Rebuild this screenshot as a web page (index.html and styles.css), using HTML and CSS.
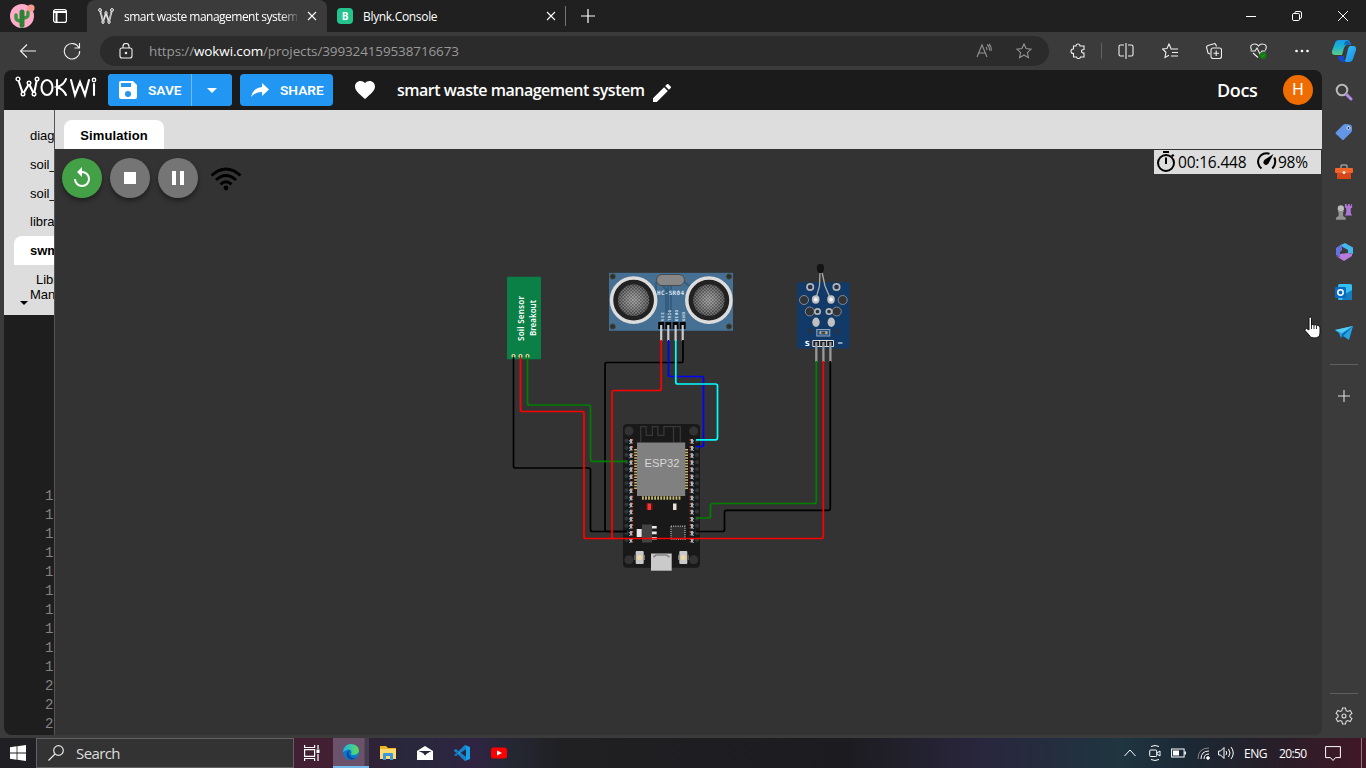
FILE: index.html
```html
<!DOCTYPE html>
<html lang="en">
<head>
<meta charset="utf-8">
<title>smart waste management system</title>
<link rel="stylesheet" href="styles.css">
</head>
<body>
<div class="browser">
  <header class="tabstrip">
    <svg class="profile" viewBox="0 0 24 24"><circle cx="12" cy="12" r="12" fill="#ffabc9"/><path d="M12 22V8M6 11v3q0 3 6 3M18 8v3q0 3-6 3" fill="none" stroke="#38943d" stroke-width="3.4" stroke-linecap="round"/><path d="M12 8v13" stroke="#2d8133" stroke-width="5" stroke-linecap="round"/><circle cx="21" cy="4" r="3.6" fill="#f69c8c"/></svg>
    <svg class="workspaces" viewBox="0 0 14 14"><rect x=".6" y=".6" width="12.8" height="12.8" rx="2" fill="none" stroke="#fff" stroke-width="1.2"/><path d="M1 3h12M3.5 3v10" stroke="#fff" stroke-width="2"/></svg>
    <div class="tab tab-active">
      <svg class="favicon" viewBox="0 0 16 16"><path d="M2 2l3 12 3-9 3 9 3-12" fill="none" stroke="#e6e6e6" stroke-width="1.700"/><path d="M2.5 2l3 12M11 14l2.5-12" stroke="#aaa"/><g fill="#333" stroke="#fff"><circle cx="2" cy="2" r="1.4"/><circle cx="14" cy="2" r="1.4"/><circle cx="8" cy="5" r="1.2"/><circle cx="5" cy="14" r="1.2"/><circle cx="11" cy="14" r="1.2"/></g></svg>
      <span class="tab-title fade">smart waste management system</span>
      <svg class="close" viewBox="0 0 10 10"><path d="M1 1l8 8M9 1l-8 8"/></svg>
    </div>
    <div class="tab tab-idle">
      <span class="blynk">B</span>
      <span class="tab-title">Blynk.Console</span>
      <svg class="close" viewBox="0 0 10 10"><path d="M1 1l8 8M9 1l-8 8"/></svg>
    </div>
    <svg class="newtab" viewBox="0 0 14 14"><path d="M7 0v14M0 7h14"/></svg>
    <div class="window-buttons">
      <svg viewBox="0 0 12 12"><path d="M1 6.5h10"/></svg>
      <svg viewBox="0 0 12 12"><rect x="1.5" y="3.5" width="7" height="7" rx="1.2"/><path d="M4 3.5v-1q0-1 1-1h4q1.500 0 1.500 1.500v4q0 1.500-1.500 1.500"/></svg>
      <svg viewBox="0 0 12 12"><path d="M1 1l10 10M11 1L1 11"/></svg>
    </div>
  </header>

  <div class="toolbar">
    <svg class="ico back" viewBox="0 0 18 18"><path d="M17 9H2M8 2.500L1.500 9 8 15.500"/></svg>
    <svg class="ico reload" viewBox="0 0 18 18"><path d="M16 6A7.700 7.700 0 1 0 16.700 9M16.500 1v5h-5"/></svg>
    <div class="address">
      <svg class="ico lock" viewBox="0 0 14 16"><rect x="1" y="5" width="12" height="10" rx="2"/><path d="M4 5V3.500a3 3 0 0 1 6 0V5"/><circle cx="7" cy="10" r=".7" fill="#fff"/></svg>
      <span class="url">https://<b>wokwi.com</b>/projects/399324159538716673</span>
      <svg class="ico dim read" viewBox="0 0 16 16"><path d="M1 14L6 2l5 12M3 10h6M10 4q1 1 .8 3M11 1.500q3 2 2.500 6M13 1q3 3 2 7"/></svg>
      <svg class="ico dim star" viewBox="0 0 16 16"><path d="M8 1l2.100 4.600 5 .6-3.700 3.400 1 5L8 12l-4.400 2.600 1-5L.9 6.200l5-.6z"/></svg>
    </div>
    <svg class="ico puzzle" viewBox="0 0 16 16"><path d="M3.500 3H6q0-2 2-2t2 2h4v3.500q-2.500 0-2.500 1.700T14 10v4h-3.500q0 1.500-2 1.500t-2-1.500h-3v-3.500Q1 10.500 1 8.200T3.500 6z"/></svg>
    <i class="bar"></i>
    <svg class="ico split" viewBox="0 0 16 16"><path d="M6 2H2.500Q1 2 1 3.500v8Q1 13 2.500 13H6M10 2h3.500Q15 2 15 3.500v8q0 1.500-1.500 1.500H10M8 0v16"/></svg>
    <svg class="ico favs" viewBox="0 0 16 16"><path d="M9 5.500L7 1 5 5.500.5 6l3.400 3.300-.9 5.200L7 12.200M8.500 6H16M10 9.500h6M9 13h7"/></svg>
    <svg class="ico coll" viewBox="0 0 16 16"><rect x="5" y="5" width="10.500" height="10.500" rx="2"/><path d="M10.200 7.500v5.500M7.500 10.200H13M4 11L2 10 .6 4.500Q.3 3 2 2.500L8 .7q1.500-.4 2 1.300l.5 1.500"/></svg>
    <svg class="ico heartbeat" viewBox="0 0 17 16"><path d="M1.500 7Q-1 1 5 1q2 0 3.500 2Q10 1 12 1q6 0 3.500 6M.5 8H5l2-3 3 6 2-3h3.500M3 10l5 4.500"/><circle cx="13" cy="12.500" r="3.500" fill="#107c10" stroke="none"/><path d="M11.600 12.600l1 1 2-2" stroke="#4a4" stroke-width=".7"/></svg>
    <svg class="ico dots" viewBox="0 0 16 16"><g fill="#fff" stroke="none"><circle cx="2.500" cy="8" r="1.300"/><circle cx="8" cy="8" r="1.300"/><circle cx="13.500" cy="8" r="1.300"/></g></svg>
    <svg class="copilot" viewBox="0 0 24 22"><defs><linearGradient id="ca" x2="0" y2="1"><stop stop-color="#159be4"/><stop offset=".5" stop-color="#20b5cd"/><stop offset="1" stop-color="#61cd80"/></linearGradient><linearGradient id="cb" x2="1" y2="1"><stop stop-color="#38c8f5"/><stop offset="1" stop-color="#168bed"/></linearGradient></defs><path d="M7 0h8q3 0 4 5h-4q-2 0-3 3l-2 7H3q-4 0-3-4l3-8q1-3 4-3z" fill="url(#ca)"/><path d="M12 5q1-5 4-4 2 .5 3 4z" fill="#126abb"/><path d="M18 6h3q4 0 3 4l-3 9q-1 3-4 3h-7q3 0 4-4l2-9q1-3 2-3z" fill="url(#cb)"/><path d="M6 16h6q-1 6 4 6h-5q-4 0-5-6z" fill="#1749d0"/></svg>
  </div>

  <div class="content">
    <main class="page">
      <nav class="appbar">
        <svg class="logo" viewBox="0 0 82 24"><g fill="none" stroke="#fff" stroke-width="2.100" stroke-linecap="round"><path d="M3 3l5 15 6-10 5 10 3-15"/><ellipse cx="32" cy="11.500" rx="5.500" ry="7.500"/><path d="M42 4v15M51 3q-2 6-9 8 6 2 9 8M56 4l4 15 5-13 5 13 4-15M79 8v11"/></g><g fill="#1b1b1b" stroke="#fff" stroke-width="1.400"><circle cx="3" cy="3" r="1.900"/><circle cx="14" cy="7" r="1.800"/><circle cx="22" cy="3" r="1.800"/><circle cx="8" cy="18" r="1.800"/><circle cx="19" cy="18" r="1.800"/><circle cx="79" cy="4" r="1.700"/></g></svg>
        <div class="save">
          <button class="btn btn-save"><svg viewBox="0 0 18 18"><path d="M2 0h12l4 4v12q0 2-2 2H2q-2 0-2-2V2Q0 0 2 0zm0 2v4h10V2zm7 8a3 3 0 1 0 0 6 3 3 0 0 0 0-6z" fill="#fff" fill-rule="evenodd"/></svg>SAVE</button>
          <button class="btn btn-drop"><svg viewBox="0 0 10 5"><path d="M0 0h10L5 5z" fill="#fff"/></svg></button>
        </div>
        <button class="btn btn-share"><svg viewBox="0 0 18 14"><path d="M18 6.500L11 0v4Q2 5 0 14q4-5 11-5v4z" fill="#fff"/></svg>SHARE</button>
        <svg class="heart" viewBox="0 0 20 18"><path d="M10 18L8.500 16.700C3.400 12.200 0 9.200 0 5.500 0 2.400 2.400 0 5.500 0 7.200 0 8.900.8 10 2.100 11.100.8 12.800 0 14.500 0 17.600 0 20 2.400 20 5.500c0 3.700-3.400 6.700-8.500 11.200z" fill="#fff"/></svg>
        <h1>smart waste management system</h1>
        <svg class="pencil" viewBox="0 0 18 18"><path d="M0 14.200V18h3.800L14.800 6.900l-3.700-3.700zM17.700 4a1 1 0 0 0 0-1.400L15.400.3a1 1 0 0 0-1.400 0l-1.800 1.800 3.700 3.700z" fill="#fff"/></svg>
        <a class="docs">Docs</a>
        <span class="avatar">H</span>
      </nav>

      <div class="workspace">
        <section class="editor">
          <div class="files">
            <div class="file">diagram</div>
            <div class="file">soil_</div>
            <div class="file">soil_</div>
            <div class="file">library</div>
            <div class="file selected">swm</div>
            <div class="manager">Library<br>Manager</div>
            <svg class="files-arrow" viewBox="0 0 8 4"><path d="M0 0h8L4 4z"/></svg>
          </div>
          <div class="code"><span>1</span><span>1</span><span>1</span><span>1</span><span>1</span><span>1</span><span>1</span><span>1</span><span>1</span><span>1</span><span>2</span><span>2</span><span>2</span></div>
        </section>

        <section class="simulation">
          <div class="sim-tabs"><div class="sim-tab">Simulation</div></div>
          <div class="canvas">
            <svg class="diagram" viewBox="55 149 1267 586">
              <defs>
                <pattern id="mesh" width="3.200" height="3.200" patternUnits="userSpaceOnUse"><rect width="3.200" height="3.200" fill="#4d4d4d"/><path d="M0 0h1.600v1.600H0zM1.600 1.600h1.600v1.600H1.600z" fill="#aaa"/></pattern>
                <radialGradient id="shade"><stop stop-color="#bbb" stop-opacity=".3"/><stop offset="1" stop-color="#222" stop-opacity=".45"/></radialGradient>
              </defs>

              <g class="soil">
                <rect x="507" y="276.800" width="34" height="82.400" rx="1" fill="#0b8046"/>
                <g fill="#3b4733" stroke="#e9e7a5" stroke-width="1.200"><circle cx="513.500" cy="356" r="1.500"/><circle cx="520.500" cy="356" r="1.500"/><circle cx="527.500" cy="356" r="1.500"/></g>
                <text transform="translate(524.300 341) rotate(-90)" textLength="45">Soil Sensor</text>
                <text transform="translate(535.500 336) rotate(-90)" textLength="36">Breakout</text>
              </g>

              <g class="sonar">
                <rect x="609" y="272.800" width="124" height="58" fill="#456f93"/>
                <path d="M658 281l8 8v24M668 286v27M671 286v27M683 281l10 8M656 282v12" fill="none" stroke="#345b7f" stroke-width="1.800"/>
                <g fill="#2b3030" stroke="#444832" stroke-width="1"><circle cx="612.700" cy="276.500" r="2.600"/><circle cx="729" cy="276.500" r="2.600"/><circle cx="612.700" cy="331" r="0"/><circle cx="612.700" cy="326.500" r="2.600"/><circle cx="729" cy="326.500" r="2.600"/></g>
                <g fill="#222" stroke="#dcdcdc" stroke-width="3.500"><circle cx="633.600" cy="300.200" r="22.100"/><circle cx="708.900" cy="300.200" r="22.100"/></g>
                <g fill="url(#mesh)"><circle cx="633.600" cy="300.200" r="15.600"/><circle cx="708.900" cy="300.200" r="15.600"/></g>
                <g fill="url(#shade)"><circle cx="633.600" cy="300.200" r="15.600"/><circle cx="708.900" cy="300.200" r="15.600"/></g>
                <rect x="656.500" y="274.500" width="28" height="11" rx="5.500" fill="#878787" stroke="#4b4b4b"/>
                <text class="mono" x="657" y="295" textLength="27">HC-SR04</text>
                <g class="tiny"><text transform="translate(663.500 321) rotate(-90)" textLength="9">VCC</text><text transform="translate(670.500 321) rotate(-90)" textLength="11">TRIG</text><text transform="translate(677.500 321) rotate(-90)" textLength="11">ECHO</text><text transform="translate(684.500 321) rotate(-90)" textLength="9">GND</text></g>
                <path d="M661.200 322v7M668.300 322v7M675.600 322v7M682.700 322v7" stroke="#080808" stroke-width="6"/>
                <path d="M661.200 325v16M668.300 325v16M675.600 325v16M682.700 325v16" stroke="#ccc" stroke-width="2.200"/>
              </g>

              <g class="thermistor">
                <rect x="797" y="282.300" width="52.500" height="66.200" fill="#123a69"/>
                <path d="M820 272l-.5 14-4 14M822 272l3 14 6 14" fill="none" stroke="#aaa" stroke-width="1.300"/>
                <path d="M817.500 265q3-2.500 6 0 1.500 4-1 8h-4q-3-4-1-8z" fill="#141414"/>
                <g fill="#303338" stroke="#898989" stroke-width="1"><circle cx="804" cy="300" r="4.500"/><circle cx="842.700" cy="300" r="4.500"/><circle cx="809.800" cy="311.500" r="4.500"/><circle cx="836.800" cy="311.500" r="4.500"/></g>
                <g fill="#243349" stroke="#b4b4b4" stroke-width="1.700"><circle cx="810.200" cy="287" r="3.200"/><circle cx="836.500" cy="287" r="3.200"/><circle cx="817.500" cy="311.500" r="2.700"/><circle cx="829" cy="311.500" r="2.700"/></g>
                <g fill="#c0c0c0"><ellipse cx="815.700" cy="299.500" rx="3.800" ry="4.200"/><ellipse cx="831" cy="299.500" rx="3.800" ry="4.200"/><ellipse cx="816" cy="322.300" rx="3.700" ry="4.700"/><ellipse cx="831.300" cy="322.300" rx="3.700" ry="4.700"/></g>
                <g fill="#f5f5f5"><circle cx="815.700" cy="299.500" r="2"/><circle cx="831" cy="299.500" r="2"/></g>
                <g fill="#24344b"><circle cx="810" cy="331" r="2.800"/><circle cx="836.800" cy="331" r="2.800"/></g>
                <rect x="816.800" y="329.500" width="13" height="6.500" fill="#275381" stroke="#91a6ba"/><path d="M819.500 332.700h8" stroke="#b6b6a8" stroke-width="3"/><path d="M821.300 332.700h4" stroke="#333" stroke-width="2"/>
                <text x="804.800" y="346.300">S</text><path d="M838 343h4.500" stroke="#fff"/>
                <path d="M812.800 340.500h20.700v6h-20.700zM819.700 340.500v6M826.700 340.500v6" fill="#161b24" stroke="#ddd" stroke-width="1"/>
                <path d="M816.300 342v20M823.400 342v20M830.400 342v20" stroke="#999" stroke-width="2.300"/>
              </g>

              <g class="esp">
                <rect x="623" y="424" width="77" height="143.800" rx="4" fill="#191919"/>
                <g fill="#323232"><circle cx="629" cy="431" r="4.500"/><circle cx="693.700" cy="431" r="4.500"/><circle cx="629" cy="559.700" r="4.500"/><circle cx="693.700" cy="559.700" r="4.500"/></g>
                <path d="M640.700 442v-15.300h5.500v8.600h6.200v-8.600h5.500v8.600h6v-8.600h16.400V442M673.500 427v15" fill="none" stroke="#373737" stroke-width="1.300"/>
                <path d="M626.500 440.800V541M697 440.800V541" stroke="#343434" stroke-width="4.200" stroke-linecap="round" stroke-dasharray="0 7.080"/>
                <g fill="none" stroke-width="1.200">
                  <path d="M631 439v104M692 439v104" stroke="#dedede" stroke-width="1.600" stroke-dasharray="4.500 2.580"/>
                  <path d="M632.500 439v104M690.300 439v104" stroke="#dc4f35" stroke-dasharray="2 1.200 1.300 2.580"/>
                  <path d="M629.600 440v104M693.400 440v104" stroke="#43a6d2" stroke-dasharray="1.500 1.500 1 3.080"/>
                </g>
                <path d="M635.700 449v40M686.500 449v40" stroke="#c6bb72" stroke-width="3" stroke-dasharray="1.500 1.250"/>
                <path d="M642 498h39.500" stroke="#c6bb72" stroke-width="3.500" stroke-dasharray="1.800 1.250"/>
                <rect x="637" y="442.500" width="48.200" height="53.500" fill="#808080"/>
                <text x="644.500" y="467" textLength="35">ESP32</text>
                <rect x="646" y="503" width="7" height="7" fill="#751818" opacity=".6"/><rect x="647.500" y="503.500" width="3.500" height="6.500" fill="#ff3030"/><rect x="673" y="503.500" width="3.500" height="6.500" fill="#e8e1d9"/>
                <rect x="642" y="524.500" width="10.200" height="18" fill="#434343"/><path d="M636.700 529h5v8h-5zM652 526h4.700v2.600H652zM652 531.600h4.700v2.600H652zM652 537h4.700v2.600H652z" fill="#e8e8e8"/>
                <rect x="671" y="526.300" width="14" height="13" fill="#2d2d2d" stroke="#aaa" stroke-width="1.400" stroke-dasharray="1 1.200"/>
                <g fill="#c9c9c9"><rect x="635.700" y="551" width="8" height="13" rx="1"/><rect x="679.300" y="551" width="8" height="13" rx="1"/></g>
                <path d="M634.800 555v5M644.500 555v5M678.500 555v5M688.200 555v5" stroke="#777"/>
                <g fill="#f1d79d"><circle cx="639.700" cy="557.500" r="2.500"/><circle cx="683.300" cy="557.500" r="2.500"/></g>
                <path d="M651 553.500h20.700v17.200H651z" fill="#cacaca"/><path d="M653.500 557l2.500-2h10.500l3 2" fill="none" stroke="#888" stroke-width="1.700"/>
              </g>

              <g class="wires">
                <path stroke="#000" d="M513.500 357V466q0 2 2 2H588.500q2 0 2 2V529.500q0 2 2 2H627"/>
                <path stroke="#000" d="M683 340V360.500q0 2-2 2H607q-2 0-2 2V529.500q0 2 2 2H627"/>
                <path stroke="green" d="M527.500 357V403q0 2 2 2H588.500q2 0 2 2V459.300q0 2 2 2H627"/>
                <path stroke="red" d="M661.200 340V388.500q0 2-2 2H614q-2 0-2 2V536.500q0 2 2 2"/>
                <path stroke="#00f" d="M668.500 340V374.500q0 2 2 2H701.500q2 0 2 2V444.500q0 2-2 2H696"/>
                <path stroke="#0ff" d="M675.800 340V382q0 2 2 2H715.500q2 0 2 2V437.800q0 2-2 2H696"/>
                <path stroke="green" d="M816.300 361V501.500q0 2-2 2H712.500q-2 0-2 2V516q0 2-2 2H696"/>
                <path stroke="#000" d="M830.300 361V508.300q0 2-2 2H726.500q-2 0-2 2V529.500q0 2-2 2H696"/>
                <path stroke="red" d="M520.500 357V409.500q0 2 2 2H582q2 0 2 2V536.500q0 2 2 2H821.300q2 0 2-2V361"/>
              </g>
            </svg>
            <div class="controls">
              <button class="round green"><svg viewBox="0 0 24 24"><path d="M12 5V1L7 6l5 5V7a6 6 0 1 1-6 6H4a8 8 0 1 0 8-8z" fill="#fff"/></svg></button>
              <button class="round"><i class="stop"></i></button>
              <button class="round"><i class="pause"></i></button>
              <svg class="wifi" viewBox="0 0 32 24"><g fill="none" stroke="#000" stroke-width="3"><path d="M1.500 8.500q14.500-13 29 0M6 13q10-9 20 0M10.500 17.300q5.500-5 11 0"/></g><circle cx="16" cy="21" r="2.400"/></svg>
            </div>
            <div class="stats">
              <svg class="clock" viewBox="0 0 18 21"><circle cx="9" cy="12" r="8" fill="none" stroke="#000" stroke-width="2"/><path d="M6 0h6v2H6zM8 6.500h2V13H8zM14 4.500l2-1.500 1.500 1.500-2 1.500z"/></svg>
              <span class="elapsed">00:16.448</span>
              <svg class="speed" viewBox="0 0 21 18"><path d="M5.500 16.500A8.500 8.500 0 0 1 13.500 1.700M18.300 5.500q2.700 6-2 11" fill="none" stroke="#000" stroke-width="2"/><path d="M17.500 2l-5 9.500q-2 2.500-4.500.5-1.500-2.500 1-4.500z"/></svg>
              <span class="percent">98%</span>
            </div>
            <svg class="cursor" viewBox="0 0 17 24"><path d="M5 14V2.500q0-1.500 1.200-1.500T7.500 2.500V9q1.300-1.200 2.500.2 1.500-1 2.500.3 1.500-.8 2.500.5 1 .5 1 2V17q0 5-6 5-4 0-5-3L1 14.500q-.5-2 1.500-2z" fill="#fff" stroke="#111" stroke-width="1"/><path d="M7.500 9v4M10 9.500V13M12.500 10v3" stroke="#333"/></svg>
          </div>
        </section>
      </div>
    </main>

    <aside class="sidebar">
      <svg viewBox="0 0 18 18"><circle cx="7" cy="7" r="5.300" fill="none" stroke="#b9b9b9" stroke-width="2"/><path d="M11.500 11.500l4.500 4.500" stroke="#b08be5" stroke-width="3" stroke-linecap="round"/></svg>
      <svg viewBox="0 0 18 18"><path d="M1 9l7-7q1-1 3-1l4 .5q2 .5 2 3v3q0 1-1 2l-7 7q-1 1-2 0l-6-5.500q-1-1 0-2z" fill="#6295e5"/><circle cx="13.500" cy="5" r="1.500" fill="#234" stroke="#fff" stroke-width=".8"/></svg>
      <svg viewBox="0 0 18 18"><path d="M6 6V3q0-1 1-1h4q1 0 1 1v3" fill="none" stroke="#999" stroke-width="1.500"/><rect y="5" width="18" height="5" rx="1" fill="#f16628"/><path d="M2 10h14v6H2z" fill="#d64618"/><circle cx="9" cy="9.500" r="1.500" fill="#eee"/></svg>
      <svg viewBox="0 0 18 20"><circle cx="5.500" cy="6" r="3.500" fill="#bbb"/><path d="M2 9h7l-1 1.500v4l3 2v2H0v-2l3-2v-4z" fill="#929292"/><path d="M10 1h2v2h1.500V1h2v2H17V1h1v4l-1.500 1v5l1.500 3h-8l1.500-3V6L10 5z" fill="#af75d7"/></svg>
      <svg viewBox="0 0 18 18"><path d="M6 2l4-2 8 4.500V11l-5-1V7L6 3z" fill="#44b8ee"/><path d="M7 1v6l-2 2v5l-4-2V5z" fill="#6773dd"/><path d="M5 14v-3l8-1 4 1v2l-8 5-8-5z" fill="#b77bdc"/></svg>
      <svg viewBox="0 0 18 18"><rect x="3" y="1" width="14" height="16" rx="1.500" fill="#32bff1"/><path d="M10 11l7-4v10H7z" fill="#147dbf"/><rect y="4" width="11" height="11" rx="1" fill="#086bc1"/><circle cx="5.500" cy="9.500" r="2.700" fill="none" stroke="#fff" stroke-width="1.500"/></svg>
      <svg viewBox="0 0 18 18"><path d="M0 6l18-4-4 14-6-4-2 2-2-5z" fill="#23a5e5"/><path d="M0 6l18-4L7 9z" fill="#55cbf2"/><path d="M7 10L18 2 8 12l-2 3z" fill="#0865ae"/></svg>
      <i class="rule"></i>
      <svg class="line add" viewBox="0 0 14 14"><path d="M7 1v12M1 7h12"/></svg>
      <i class="rule lower"></i>
      <svg class="line gear" viewBox="0 0 18 18"><path d="M7.500 1h3l.6 2.700 1.500.8L15.200 3.500l1.700 2.800-2 1.900v1.600l2 1.900-1.700 2.800-2.600-1-1.500.8-.6 2.700h-3l-.6-2.700-1.500-.8-2.600 1-1.700-2.800 2-1.900V8.200l-2-1.900 1.700-2.800 2.600 1 1.500-.8z"/><circle cx="9" cy="9" r="2"/></svg>
    </aside>
  </div>
</div>

<footer class="taskbar">
  <div class="start"><svg viewBox="0 0 16 16"><path d="M0 2.200L6.600 1.300v6.200H0zM7.400 1.200L16 0v7.500H7.400zM0 8.400h6.600v6.300L0 13.800zM7.400 8.400H16V16l-8.600-1.200z" fill="#fff"/></svg></div>
  <div class="search"><svg viewBox="0 0 16 16"><circle cx="10.500" cy="5.500" r="4.800"/><path d="M7 9L.5 15.500"/></svg><span>Search</span></div>
  <div class="taskview"><svg viewBox="0 0 16 16"><path d="M.6 0v2.500h10V0M.6 16v-2.500h10V16M.6 4.600h10v6.800H.6zM14 0v4M14 9v7" fill="none" stroke="#fff" stroke-width="1.200"/><path d="M12.500 4.500h3v3.500h-3z" fill="#fff"/></svg></div>
  <div class="app edge"><svg viewBox="0 0 16 16"><defs><linearGradient id="edge"><stop stop-color="#25afe4"/><stop offset="1" stop-color="#5bdf59"/></linearGradient></defs><circle cx="8" cy="8" r="8" fill="#087bd0"/><path d="M0 8Q1 0 8 0q8 1 8 7-1 4-6 4-3 0-1.500-2.500Q8 3 0 8z" fill="url(#edge)"/><path d="M7 6q-3 4 1 7 3 2 6 0Q9 18 5 14 1 9 7 6z" fill="#0b4b9b"/></svg></div>
  <div class="app"><svg viewBox="0 0 16 16"><path d="M0 1h6l2 2h8v11H0z" fill="#f0b820"/><path d="M0 4h16v10H0z" fill="#ffda70"/><path d="M3 15V9q0-1 1-1h8q1 0 1 1v6h-3v-4H6v4z" fill="#3c98dd"/></svg></div>
  <div class="app"><svg viewBox="0 0 16 16"><path d="M0 6l8-5 8 5v9H0z" fill="#fff"/><path d="M1.500 6h13L10 8.500l-2 2L6 8z" fill="#252737"/></svg></div>
  <div class="app"><svg viewBox="0 0 16 16"><path d="M11 0l5 2v12l-5 2-8-8z" fill="#159fe4"/><path d="M12 4v8L6 8z" fill="#292640"/><path d="M0 5l2-1 10 8v4L0 6zM0 10l2 1L12 4V0L0 10z" fill="#157fca"/></svg></div>
  <div class="app"><svg viewBox="0 0 16 16"><rect y="2.500" width="16" height="11" rx="2.500" fill="red"/><path d="M6 5.500l5 2.500-5 2.500z" fill="#fff"/></svg></div>
  <div class="tray">
    <svg class="t-up" viewBox="0 0 12 16"><path d="M.5 11L6 5l5.500 6"/></svg>
    <svg class="t-cam" viewBox="0 0 12 16"><rect x=".7" y="5" width="7" height="6.500" rx="1"/><path d="M8 8l3-2v5L8 9M2 1.500q4-2 8 0M2 14.500q4 2 8 0"/></svg>
    <svg class="t-bat" viewBox="0 0 15 16"><rect x=".6" y="4" width="12.500" height="8"/><path d="M14.200 6.500v3M2.500 8h5" stroke-width="1.500"/><rect x="2.500" y="6" width="5" height="4" fill="#fff"/></svg>
    <svg class="t-net" viewBox="0 0 13 16"><path d="M1 14Q1 3 12 3" stroke="#888"/><path d="M4 14q0-8 8-8M7 14q0-5 5-5"/><circle cx="11" cy="13" r="1.300" fill="#fff"/></svg>
    <svg class="t-vol" viewBox="0 0 16 16"><path d="M.6 6h2L6 2.500v11L2.600 10h-2zM8 6q1.500 2 0 4M10.500 4q3 4 0 8M13 2q4.500 6 0 12"/></svg>
    <span class="lang">ENG</span><span class="time">20:50</span>
    <svg class="t-note" viewBox="0 0 16 16"><path d="M.6.6h14.800v11H10.500L8 14.500 5.500 11.600H.6z"/></svg>
    <i class="peek"></i>
  </div>
</footer>
</body>
</html>
```
FILE: styles.css
```css
* { box-sizing: border-box; }
html, body { margin: 0; width: 1366px; height: 768px; overflow: hidden; }
body { background: #3b3b3b; color: #fff; font-family: "Open Sans", "Noto Sans", sans-serif; }
svg { display: block; flex: none; }
button { border: 0; margin: 0; padding: 0; color: #fff; }
.browser { display: flex; flex-direction: column; height: 738px; }

/* window tabs */
.tabstrip { height: 32px; flex: none; display: flex; align-items: center; background: #202020; }
.profile { width: 24px; height: 24px; margin-left: 10px; overflow: visible; }
.workspaces { width: 14px; height: 14px; margin-left: 19px; }
.tab { height: 32px; display: flex; align-items: center; font-size: 12px; }
.tab-active { width: 240px; margin-left: 20px; background: #3b3b3b; border-radius: 8px 8px 0 0; padding-left: 11px; }
.favicon { width: 16px; height: 16px; }
.tab-title { white-space: nowrap; overflow: hidden; letter-spacing: -.32px; }
.tab-active .tab-title { width: 173px; margin-left: 10px; letter-spacing: -.52px; font-weight: 500; }
.fade { -webkit-mask-image: linear-gradient(90deg, #000 90%, #0003); mask-image: linear-gradient(90deg, #000 90%, #0003); }
.close { width: 10px; height: 10px; stroke: #fff; stroke-width: 1.1; }
.tab-active .close { margin-left: 9.5px; }
.tab-idle { width: 239px; height: 20px; padding-left: 10px; border-right: 1px solid #777; }
.tab-idle .tab-title { width: 182px; margin-left: 10px; }
.tab-idle .close { margin-left: .5px; }
.blynk { width: 16px; height: 16px; border-radius: 4px; background: #24c48e; font: bold 10px/16px "Open Sans", sans-serif; text-align: center; }
.newtab { width: 14px; height: 14px; margin-left: 14.5px; stroke: #fff; stroke-width: 1.2; }
.window-buttons { margin-left: auto; margin-right: 17px; display: flex; gap: 34px; }
.window-buttons svg { width: 12px; height: 12px; fill: none; stroke: #fff; }

/* address row */
.toolbar { height: 38px; flex: none; display: flex; align-items: center; background: #3b3b3b; }
.ico { width: 16px; height: 16px; fill: none; stroke: #efefef; stroke-width: 1.1; }
.back { width: 18px; height: 18px; margin-left: 19px; }
.reload { width: 18px; height: 18px; margin-left: 26px; }
.address { width: 949px; height: 30px; margin-left: 19px; padding-left: 19px; border-radius: 15px; background: #2b2b2b; display: flex; align-items: center; }
.lock { width: 14px; }
.url { width: 310px; margin-left: 16px; font-size: 13.5px; letter-spacing: -.13px; white-space: nowrap; color: #999; }
.url b { font-weight: 400; color: #fff; }
.dim { stroke: #939393; }
.read { margin-left: 517px; }
.star { margin-left: 24px; }
.puzzle { margin-left: 20.5px; }
.bar { width: 1px; height: 16px; margin-left: 15.5px; background: #626262; }
.split { margin-left: 15.5px; }
.favs, .coll { margin-left: 28.3px; }
.heartbeat { width: 17px; margin-left: 28px; }
.dots { margin-left: 27px; }
.copilot { width: 24px; height: 22px; margin-left: 22px; }

.content { flex: 1; display: flex; min-height: 0; background: #3b3b3b; }
.page { width: 1318px; height: 665px; margin-left: 4px; border-radius: 8px; overflow: hidden; display: flex; flex-direction: column; background: #333; }
.appbar { height: 40px; flex: none; display: flex; align-items: center; background: #1b1b1b; }
.logo { width: 82px; height: 24px; margin: -4px 0 0 11px; }
.save { display: flex; gap: 1px; margin-left: 11px; background: #72b8f5; border-radius: 4px; }
.btn { height: 32px; background: #2196f3; border-radius: 4px; display: flex; align-items: center; font: 600 13.7px Roboto, sans-serif; }
.btn-save { width: 83px; padding-left: 11px; border-radius: 4px 0 0 4px; }
.btn-save svg { width: 18px; height: 18px; margin-right: 11px; }
.btn-drop { width: 40px; justify-content: center; border-radius: 0 4px 4px 0; }
.btn-drop svg { width: 10px; height: 5px; }
.btn-share { width: 93px; margin-left: 8px; padding-left: 11px; }
.btn-share svg { width: 18px; height: 14px; margin-right: 11px; }
.heart { width: 20px; height: 18px; margin-left: 22px; }
.appbar h1 { width: 247px; margin: 0 0 0 22px; font: 600 16px "Open Sans", sans-serif; white-space: nowrap; letter-spacing: -.49px; }
.pencil { width: 18px; height: 18px; margin: 5px 0 0 9px; }
.docs { margin-left: auto; width: 41px; font: 600 18px "Open Sans", sans-serif; letter-spacing: -.35px; }
.avatar { width: 30px; height: 30px; margin: 0 9px 0 25px; border-radius: 50%; background: #ef6c00; font: 16px/30px Roboto, sans-serif; text-align: center; }

.workspace { display: flex; flex: 1; min-height: 0; }
.editor { width: 51px; flex: none; display: flex; flex-direction: column; overflow: hidden; border-right: 1px solid #555; }
.files { height: 205px; flex: none; background: #ddd; padding: 11px 0 0 10px; color: #000; font: 13px "Liberation Sans", Arial, sans-serif; }
.file { height: 28.8px; padding: 7px 0 0 16px; line-height: 15px; }
.selected { background: #fff; border-radius: 8px 0 0 0; font-weight: bold; }
.manager { padding: 7px 0 0 16px; line-height: 15px; text-indent: 6px; }
.manager br + * { text-indent: 0; }
.manager { text-indent: 6px; }
.files-arrow { width: 8px; height: 4px; margin: -1px 0 0 6px; }
.code { flex: 1; background: #1e1e1e; padding: 172px 0 0 41px; display: flex; flex-direction: column; font: 14px/19px "Liberation Mono", monospace; color: #858585; }
.simulation { width: 1267px; flex: none; display: flex; flex-direction: column; }
.sim-tabs { height: 39px; flex: none; padding: 10px 0 0 9px; background: #ddd; }
.sim-tab { width: 100px; height: 29px; border-radius: 8px 8px 0 0; background: #fff; color: #000; text-align: center; font: bold 13px/31px "Liberation Sans", Arial, sans-serif; letter-spacing: .1px; }
.canvas { flex: 1; position: relative; background: #333; }
.diagram { width: 1267px; height: 586px; }
.diagram text { fill: #fff; }
.soil text { font: 600 8px "Noto Sans", sans-serif; }
.sonar .mono { font: bold 6px "DejaVu Sans Mono", monospace; fill: #d8e2ed; }
.sonar .tiny text { font: bold 4px "DejaVu Sans Mono", monospace; fill: #d8e2ed; }
.thermistor text { font: bold 7px "DejaVu Sans", sans-serif; }
.esp text { font: 11.2px "Liberation Sans", sans-serif; fill: #d7d7d7; }
.wires path { fill: none; stroke-width: 1.7; }
.controls { position: absolute; left: 7px; top: 9px; display: flex; align-items: center; gap: 8px; }
.round { width: 40px; height: 40px; border-radius: 50%; background: #757575; display: flex; align-items: center; justify-content: center; box-shadow: 0 3px 5px #0006; }
.green { background: #43a047; }
.green svg { width: 24px; height: 24px; }
.stop { width: 12px; height: 12px; background: #fff; }
.pause { width: 12px; height: 14px; border: solid #fff; border-width: 0 4px; }
.wifi { width: 32px; height: 24px; margin-left: 4px; margin-top: 2px; }
.stats { position: absolute; right: 1px; top: 1px; width: 167px; height: 24px; padding-left: 3px; display: flex; align-items: center; background: #ddd; color: #000; font-size: 15.5px; }
.clock { width: 18px; height: 21px; margin-top: -2px; }
.elapsed { width: 69px; margin-left: 3px; letter-spacing: -.2px; }
.speed { width: 21px; height: 18px; margin-left: 9px; margin-top: -2px; }
.percent { margin-left: 1px; letter-spacing: -.3px; }
.cursor { position: absolute; left: 1249px; top: 167px; width: 17px; height: 24px; }

.sidebar { width: 44px; padding-top: 12.5px; display: flex; flex-direction: column; align-items: center; gap: 22.2px; }
.sidebar svg { width: 18px; height: 18px; }
.sidebar .line { fill: none; stroke: #ddd; stroke-width: 1.1; }
.rule { width: 28px; height: 1px; background: #606060; }
.sidebar .add { width: 14px; height: 14px; margin-top: 2px; }
.sidebar .lower { margin-top: auto; }
.sidebar .gear { margin: -9px 0 13px; }

/* desktop bar */
.taskbar { height: 30px; display: flex; background: linear-gradient(90deg, #202024 0, #202024 36px, #431e30 294px, #302136 368px, #28283c 410px, #302442 475px, #252735 505px, #202023 560px, #1c1c20 850px, #29263d 980px, #1f3540 1120px, #1b2935 1185px, #251f29 1265px, #421726 1366px); }
.start { width: 36px; padding: 7px 0 0 10px; }
.start svg { width: 16px; height: 16px; }
.search { width: 258px; display: flex; align-items: center; border: 1px solid #626262; background: #333; color: #ddd; font-size: 15px; letter-spacing: -.6px; padding-left: 11px; }
.search svg { width: 16px; height: 16px; margin-right: 12px; fill: none; stroke: #e6e6e6; stroke-width: 1.2; }
.taskview { width: 39px; padding: 7px 0 0 10px; background: #421f32; }
.taskview svg { width: 16px; height: 16px; }
.app { width: 37px; display: flex; align-items: center; justify-content: center; }
.app svg { width: 16px; height: 16px; }
.edge { width: 36px; background: linear-gradient(90deg, #6b526b 31px, #463c50 32px); border-bottom: 2px solid #76b9ed; }
.tray { margin-left: auto; display: flex; align-items: center; font-size: 12px; }
.tray svg { height: 16px; fill: none; stroke: #fff; }
.t-up { width: 12px; }
.t-cam { width: 12px; margin-left: 13px; }
.t-bat { width: 15px; margin-left: 10px; }
.t-net { width: 13px; margin-left: 11px; }
.t-vol { width: 16px; margin-left: 8px; }
.lang { width: 24px; margin-left: 10px; letter-spacing: -.5px; }
.time { width: 30px; margin-left: 11px; letter-spacing: -.6px; }
.t-note { width: 16px; margin: 2px 0 0 16px; }
.peek { width: 1px; height: 30px; margin-left: 20px; margin-right: 4px; background: #8b7882; }
```
